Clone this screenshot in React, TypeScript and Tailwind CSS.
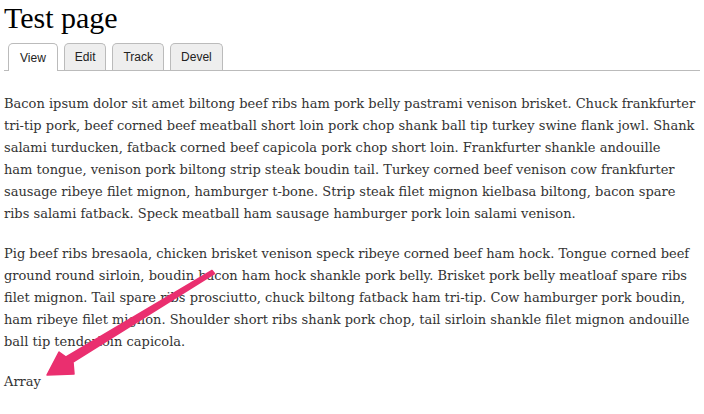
const para1 = [
  'Bacon ipsum dolor sit amet biltong beef ribs ham pork belly pastrami venison brisket. Chuck frankfurter',
  'tri-tip pork, beef corned beef meatball short loin pork chop shank ball tip turkey swine flank jowl. Shank',
  'salami turducken, fatback corned beef capicola pork chop short loin. Frankfurter shankle andouille',
  'ham tongue, venison pork biltong strip steak boudin tail. Turkey corned beef venison cow frankfurter',
  'sausage ribeye filet mignon, hamburger t-bone. Strip steak filet mignon kielbasa biltong, bacon spare',
  'ribs salami fatback. Speck meatball ham sausage hamburger pork loin salami venison.',
];

const para2 = [
  'Pig beef ribs bresaola, chicken brisket venison speck ribeye corned beef ham hock. Tongue corned beef',
  'ground round sirloin, boudin bacon ham hock shankle pork belly. Brisket pork belly meatloaf spare ribs',
  'filet mignon. Tail spare ribs prosciutto, chuck biltong fatback ham tri-tip. Cow hamburger pork boudin,',
  'ham ribeye filet mignon. Shoulder short ribs shank pork chop, tail sirloin shankle filet mignon andouille',
  'ball tip tenderloin capicola.',
];

const tabs = ['View', 'Edit', 'Track', 'Devel'];

function Paragraph({ lines }: { lines: string[] }) {
  return (
    <p className="mb-[18px]">
      {lines.map((line, i) => (
        <span key={i} className="block whitespace-nowrap">
          {line}
        </span>
      ))}
    </p>
  );
}

function Arrow() {
  // pink annotation arrow pointing at "Array"
  return (
    <svg className="pointer-events-none absolute left-0 top-0" width="704" height="414" viewBox="0 0 704 414">
      <path
        d="M212 270.5 L214.5 273.5 L73 362 L74 374 L47 375 L59 352 L66 357 Z"
        fill="#ea2f6f"
        stroke="#ea2f6f"
        strokeWidth="1.5"
        strokeLinejoin="round"
      />
    </svg>
  );
}

export default function App() {
  return (
    <div className="relative h-[414px] w-[704px] overflow-hidden bg-white">
      <div className="px-1">
        <h1 className="pt-[1px] font-['Liberation_Serif',serif] text-[30px] leading-[33px] text-black">
          Test page
        </h1>

        <div className="mt-[9px] flex items-end gap-[6px] border-b border-[#bbb] pl-1 font-['Liberation_Sans',Arial,sans-serif] text-[12px]">
          {tabs.map((t, i) => (
            <div
              key={t}
              className={
                i === 0
                  ? 'relative -mb-px flex h-[28px] items-center rounded-t-[5px] border border-b-0 border-[#bbb] bg-white px-[11px] text-[#222]'
                  : 'flex h-[27px] items-center rounded-t-[5px] border border-b-0 border-[#bbb] bg-[#eee] px-[10px] text-[#222]'
              }
            >
              {t}
            </div>
          ))}
        </div>

        <div className="mt-[22px] font-['DejaVu_Serif',serif] text-[13px] leading-[22px] text-[#333]">
          <Paragraph lines={para1} />
          <Paragraph lines={para2} />
          <p>Array</p>
        </div>
      </div>
      <Arrow />
    </div>
  );
}
